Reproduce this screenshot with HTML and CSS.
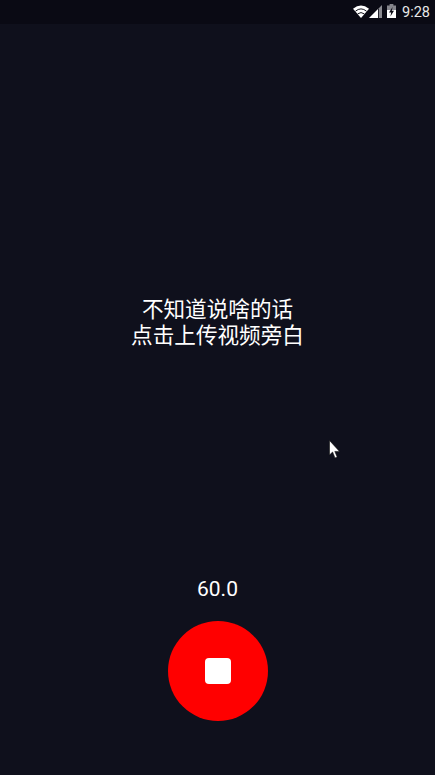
FILE: index.html
```html
<!DOCTYPE html>
<html lang="zh">
<head>
  <meta charset="UTF-8">
  <title>录制旁白</title>
  <link rel="stylesheet" href="styles.css">
</head>
<body>
  <div class="status-bar">
    <svg class="icon-wifi" width="16" height="13" viewBox="0 0 17 13" preserveAspectRatio="none">
      <path d="M8.5 13 L0 3.8 Q8.5 -2.6 17 3.8 Z" fill="#fff"/>
      <path d="M2.6 6.2 Q8.5 1.6 14.4 6.2" fill="none" stroke="#0a0a14" stroke-width="1"/>
      <path d="M5 8.9 Q8.5 6.2 12 8.9" fill="none" stroke="#0a0a14" stroke-width="1"/>
    </svg>
    <svg class="icon-signal" width="13" height="13" viewBox="0 0 13 13">
      <path d="M0 13 L9 4 V13 Z" fill="#fff"/>
      <path d="M9.8 3.2 L13 0 V13 H9.8 Z" fill="#8a8a90"/>
    </svg>
    <svg class="icon-battery" width="9" height="14" viewBox="0 0 9 14">
      <path d="M2.6 0 H6.4 V1.4 H9 V14 H0 V1.4 H2.6 Z" fill="#85858b"/>
      <path d="M0 6 H9 V14 H0 Z" fill="#fff"/>
      <path d="M5.6 3 L2 8.4 H4.2 L3.4 12.6 L7 6.8 H4.8 Z" fill="#0a0a14"/>
    </svg>
    <span class="clock">9:28</span>
  </div>

  <div class="main">
    <p class="hint">不知道说啥的话<br>点击上传视频旁白</p>
  </div>

  <div class="recorder">
    <div class="countdown">60.0</div>
    <button class="record-btn"><span class="stop-icon"></span></button>
  </div>

  <svg class="cursor" width="12" height="19" viewBox="0 0 12 19">
    <path d="M0.5 0.5 V15 L3.6 12 L6 18 L8.2 17 L5.8 11.4 H10.5 Z" fill="#fff" stroke="#111" stroke-width="0.6"/>
  </svg>
</body>
</html>
```

FILE: styles.css
```css
html, body {
  height: 100%;
}

body {
  margin: 0;
  position: relative;
  display: flex;
  flex-direction: column;
  overflow: hidden;
  background: #0f101c;
  color: #fff;
  font-family: Roboto, "Noto Sans CJK SC", sans-serif;
}

.status-bar {
  flex: 0 0 24px;
  display: flex;
  align-items: center;
  justify-content: flex-end;
  padding-right: 5px;
  background: #0a0a14;
}

.status-bar svg {
  margin-bottom: 2px;
}

.icon-signal {
  margin-right: 5px;
}

.clock {
  margin-left: 6px;
  font-size: 14.5px;
  color: #e8e8e8;
}

.main {
  flex: 1;
  display: flex;
  justify-content: center;
  padding-top: 273px;
}

.hint {
  margin: 0;
  font-size: 21.6px;
  line-height: 26px;
  text-align: center;
}

.recorder {
  display: flex;
  flex-direction: column;
  align-items: center;
  padding-bottom: 54px;
}

.countdown {
  font-size: 21px;
  line-height: 26px;
  margin-bottom: 19px;
}

.record-btn {
  width: 100px;
  height: 100px;
  padding: 0;
  border: 0;
  border-radius: 50%;
  background: #f00;
  display: flex;
  align-items: center;
  justify-content: center;
}

.stop-icon {
  width: 26px;
  height: 26px;
  border-radius: 4px;
  background: #fff;
}

.cursor {
  position: absolute;
  left: 329px;
  top: 440px;
}
```
